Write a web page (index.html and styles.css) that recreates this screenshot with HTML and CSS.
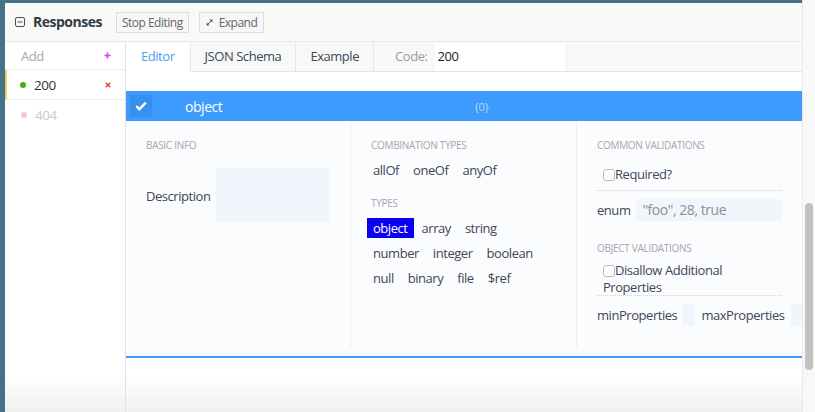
FILE: index.html
```html
<!DOCTYPE html>
<html lang="en">
<head>
<meta charset="utf-8">
<title>Responses</title>
<link rel="stylesheet" href="styles.css">
</head>
<body>
<div class="app">
  <div class="frame">
    <div class="panel">
      <header class="head">
        <svg class="collapse" width="10" height="10" viewBox="0 0 10 10"><rect x="0.5" y="0.5" width="9" height="9" rx="1.6" fill="none" stroke="#4a4a4a" stroke-width="1"/><line x1="2.5" y1="5" x2="7.5" y2="5" stroke="#4a4a4a" stroke-width="1"/></svg>
        <h2 class="title">Responses</h2>
        <button class="btn">Stop Editing</button>
        <button class="btn btn-expand"><svg class="expand-icon" width="7" height="7" viewBox="0 0 7 7"><line x1="1.2" y1="5.8" x2="5.8" y2="1.2" stroke="#555" stroke-width="1"/><path d="M3.4 0.6 H6.4 V3.6 Z" fill="#555"/><path d="M0.6 3.4 V6.4 H3.6 Z" fill="#555"/></svg>Expand</button>
      </header>
      <div class="body">
        <aside class="side">
          <div class="row row-add">
            <span class="add-label">Add</span>
            <svg class="plus" width="7" height="7" viewBox="0 0 7 7"><line x1="3.5" y1="0.5" x2="3.5" y2="6.5" stroke="#e33ef4" stroke-width="1.6"/><line x1="0.5" y1="3.5" x2="6.5" y2="3.5" stroke="#e33ef4" stroke-width="1.6"/></svg>
          </div>
          <div class="row row-active">
            <span class="dot dot-ok"></span>
            <span class="code">200</span>
            <span class="del"><svg width="6" height="6" viewBox="0 0 6 6"><line x1="0.8" y1="0.8" x2="5.2" y2="5.2" stroke="#e5463f" stroke-width="1.5"/><line x1="5.2" y1="0.8" x2="0.8" y2="5.2" stroke="#e5463f" stroke-width="1.5"/></svg></span>
          </div>
          <div class="row row-muted">
            <span class="dot dot-err"></span>
            <span class="code">404</span>
          </div>
        </aside>
        <section class="main">
          <nav class="tabs">
            <div class="tab tab-active">Editor</div>
            <div class="tab">JSON Schema</div>
            <div class="tab">Example</div>
            <div class="code-field"><span class="code-label">Code:</span><span class="code-input">200</span></div>
            <div class="tabs-fill"></div>
          </nav>
          <div class="schema">
            <div class="bar">
              <span class="bar-check"><svg width="12" height="10" viewBox="0 0 12 10"><path d="M1.3 5.2 L4.4 8.2 L10.8 1.6" fill="none" stroke="#fff" stroke-width="2.4" stroke-linejoin="miter"/></svg></span>
              <span class="bar-type">object</span>
              <span class="bar-count">{0}</span>
            </div>
            <div class="cols">
              <div class="col">
                <h3 class="sec">BASIC INFO</h3>
                <div class="desc-row">
                  <span class="lbl">Description</span>
                  <span class="desc-input"></span>
                </div>
              </div>
              <div class="col col-mid">
                <h3 class="sec">COMBINATION TYPES</h3>
                <div class="items items-comb">
                  <span class="item">allOf</span><span class="item">oneOf</span><span class="item">anyOf</span>
                </div>
                <h3 class="sec sec-types">TYPES</h3>
                <div class="types">
                  <div class="items"><span class="item item-on">object</span><span class="item">array</span><span class="item">string</span></div>
                  <div class="items"><span class="item">number</span><span class="item">integer</span><span class="item">boolean</span></div>
                  <div class="items"><span class="item">null</span><span class="item">binary</span><span class="item">file</span><span class="item">$ref</span></div>
                </div>
              </div>
              <div class="col col-right">
                <h3 class="sec">COMMON VALIDATIONS</h3>
                <div class="check-line check-required"><span class="box"></span>Required?</div>
                <div class="field-row field-enum">
                  <span class="lbl">enum</span>
                  <span class="enum-input">"foo", 28, true</span>
                </div>
                <h3 class="sec sec-obj">OBJECT VALIDATIONS</h3>
                <div class="check-line check-disallow"><span class="box"></span>Disallow Additional Properties</div>
                <div class="field-row field-props">
                  <span class="lbl">minProperties</span>
                  <span class="mini-input"></span>
                  <span class="lbl">maxProperties</span>
                  <span class="mini-input"></span>
                </div>
              </div>
            </div>
          </div>
        </section>
      </div>
    </div>
  </div>
  <div class="track"><div class="thumb"></div></div>
</div>
</body>
</html>
```

FILE: styles.css
```css
* { box-sizing: border-box; }

html, body {
  margin: 0;
  height: 412px;
  overflow: hidden;
}

body {
  background: #44728b;
  font-family: "Open Sans", "Noto Sans", sans-serif;
  font-size: 13px;
  letter-spacing: -0.45px;
  color: #3f4656;
}

.app {
  display: flex;
  height: 412px;
}

.frame {
  flex: 0 0 802px;
  padding: 3px 0 0 5px;
}

.panel {
  height: 409px;
  background: #fff;
  display: flex;
  flex-direction: column;
  overflow: hidden;
}

/* header */
.head {
  flex: 0 0 39px;
  display: flex;
  align-items: center;
  padding-left: 10px;
  background: #f9f9f9;
  border-bottom: 1px solid #e6e6e6;
}

.collapse {
  display: block;
  margin-right: 8px;
}

.title {
  margin: 0 14px 0 0;
  font-size: 14px;
  font-weight: 700;
  letter-spacing: -0.5px;
  color: #333a44;
  line-height: 18px;
}

.btn {
  height: 21px;
  display: flex;
  align-items: center;
  padding: 0 5px;
  margin: 0 10px 0 0;
  border: 1px solid #dddddd;
  background: #f7f7f7;
  font-family: "Open Sans", "Noto Sans", sans-serif;
  font-size: 12px;
  letter-spacing: -0.5px;
  color: #666;
  line-height: 19px;
}

.btn-expand {
  padding: 0 6px;
}

.expand-icon {
  display: block;
  margin-right: 6px;
}

/* body */
.body {
  flex: 1;
  display: flex;
  min-height: 0;
  background: linear-gradient(to bottom, #fff calc(100% - 36px), #f0f0f0 100%);
}

.side {
  flex: 0 0 121px;
  border-right: 1px solid #e1e1e1;
}

.row {
  display: flex;
  align-items: center;
  height: 30px;
  border-bottom: 1px solid #ededed;
  padding: 0 10px 0 16px;
}

.row-add {
  height: 28px;
  padding-right: 14px;
}

.add-label {
  flex: 1;
  color: #a9a9a9;
}

.plus { display: block; }

.row-active {
  border-left: 2px solid #f6cd55;
  padding-left: 13px;
}

.row-muted {
  border-bottom: none;
}

.dot {
  width: 6px;
  height: 6px;
  border-radius: 50%;
  margin-right: 8px;
}

.dot-ok { background: #4cad19; }
.dot-err { background: #f6c8c8; }

.code {
  flex: 1;
  font-size: 13.5px;
  color: #333;
}

.row-muted .code { color: #c9c9c9; }

.del {
  width: 14px;
  height: 10px;
  display: flex;
  align-items: center;
  justify-content: center;
  background: #fff;
}

.del svg { display: block; }

/* main */
.main {
  flex: 1;
  display: flex;
  flex-direction: column;
  min-width: 0;
}

.tabs {
  display: flex;
  height: 30px;
  flex: 0 0 30px;
}

.tab {
  padding: 0 14px;
  line-height: 29px;
  background: #f7f8f8;
  border-left: 1px solid #e6e6e6;
  border-bottom: 1px solid #e4e4e4;
  color: #3f4656;
  font-size: 13px;
}

.tab-active {
  padding: 0 15px;
  background: #fff;
  border-left: none;
  border-bottom-color: #fff;
  color: #4a9eef;
}

.code-field {
  display: flex;
  align-items: stretch;
  padding-left: 21px;
  background: #f7f8f8;
  border-left: 1px solid #e6e6e6;
  border-bottom: 1px solid #e4e4e4;
}

.code-label {
  line-height: 28px;
  color: #9b9b9b;
  margin-right: 7px;
}

.code-input {
  width: 130px;
  background: #fff;
  padding-left: 3px;
  line-height: 28px;
  color: #222;
}

.tabs-fill {
  flex: 1;
  background: #f7f8f8;
  border-bottom: 1px solid #e4e4e4;
  border-top: 1px solid #fcfcfc;
}

/* schema editor */
.schema {
  margin-top: 19px;
  background: #fbfcfe;
  padding-bottom: 8px;
  border-bottom: 2px solid #3f9cf8;
}

.bar {
  height: 30px;
  display: flex;
  align-items: center;
  padding-left: 4px;
  background: #3d9bfd;
}

.bar-check {
  width: 22px;
  height: 22px;
  display: flex;
  align-items: center;
  justify-content: center;
  background: #3890ee;
}

.bar-check svg { display: block; }

.bar-type {
  margin-left: 33px;
  font-size: 14px;
  color: #fff;
}

.bar-count {
  margin-left: 252px;
  font-size: 11px;
  letter-spacing: 0;
  color: #b7d9ff;
}

.cols {
  display: grid;
  grid-template-columns: 224px 1fr 1fr;
  height: 227px;
  overflow: hidden;
}

.col {
  padding: 18px 20px 0 20px;
  min-width: 0;
}

.col-mid, .col-right {
  border-left: 1px solid #eceef1;
}

.sec {
  margin: 0;
  font-size: 10px;
  letter-spacing: -0.3px;
  font-weight: 400;
  line-height: 13px;
  color: #a3a7ae;
  white-space: nowrap;
}

.desc-row {
  display: flex;
  align-items: center;
  margin-top: 16px;
}

.lbl {
  white-space: nowrap;
  flex-shrink: 0;
  color: #3f4656;
}

.desc-row .lbl { margin-right: 6px; }

.desc-input {
  width: 115px;
  height: 55px;
  background: #f1f6fd;
}

.items {
  display: flex;
  gap: 2px;
  margin-left: -4px;
}

.items-comb { margin-top: 8px; }

.item {
  height: 20px;
  line-height: 20px;
  padding: 0 6px;
  white-space: nowrap;
}

.item-on {
  background: #0b00f2;
  color: #fff;
}

.sec-types { margin-top: 17px; }

.types {
  display: flex;
  flex-direction: column;
  gap: 5px;
  margin-top: 8px;
}

.check-line {
  padding-left: 6px;
  line-height: 16.5px;
  border-bottom: 1px dotted #cfd2d6;
}

.box {
  display: inline-block;
  width: 12px;
  height: 12px;
  border: 1px solid #b9b9b9;
  border-radius: 3px;
  background: #fff;
  vertical-align: -2px;
}

.check-required {
  margin-top: 14px;
  padding-bottom: 7px;
  line-height: 17px;
}

.check-disallow {
  margin-top: 7px;
}

.field-row {
  display: flex;
  align-items: center;
  margin-top: 8px;
}

.field-enum .lbl { margin-right: 6px; }

.enum-input {
  flex: 1;
  height: 22px;
  line-height: 22px;
  padding-left: 6px;
  background: #f1f6fd;
  font-size: 14px;
  color: #8b9099;
  white-space: nowrap;
}

.sec-obj { margin-top: 21px; }

.field-props {
  height: 22px;
}

.mini-input {
  flex: 0 0 12px;
  height: 22px;
  margin: 0 6px;
  background: #f1f6fd;
}

/* scrollbar */
.track {
  flex: 1;
  background: #f8f8f8;
  border-left: 1px solid #e9e9e9;
  padding-top: 203px;
  display: flex;
  justify-content: center;
  align-items: flex-start;
}

.thumb {
  width: 8px;
  height: 167px;
  border-radius: 4px;
  background: #c2c2c2;
}
```
